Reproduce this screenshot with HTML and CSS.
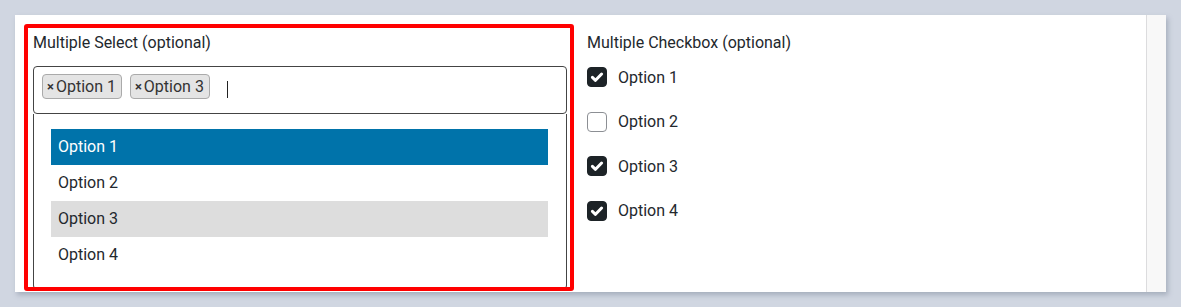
FILE: index.html
```html
<!DOCTYPE html>
<html lang="en">
<head>
<meta charset="utf-8">
<title>Fields</title>
<link rel="stylesheet" href="styles.css">
</head>
<body>
<div class="card">
  <div class="field field-select">
    <div class="label">Multiple Select (optional)</div>
    <div class="select">
      <span class="tag"><span class="tag-x">×</span>Option 1</span>
      <span class="tag"><span class="tag-x">×</span>Option 3</span>
      <span class="caret"></span>
    </div>
    <div class="dropdown">
      <ul class="options">
        <li class="opt opt-active">Option 1</li>
        <li class="opt">Option 2</li>
        <li class="opt opt-selected">Option 3</li>
        <li class="opt">Option 4</li>
      </ul>
    </div>
  </div>
  <div class="field field-check">
    <div class="label">Multiple Checkbox (optional)</div>
    <div class="checks">
      <label class="check"><span class="box box-on"><svg viewBox="0 0 20 20" width="20" height="20"><path d="M5.4 10.3 L8.5 13.3 L14.6 7" fill="none" stroke="#fff" stroke-width="3" stroke-linecap="round" stroke-linejoin="round"/></svg></span>Option 1</label>
      <label class="check"><span class="box"></span>Option 2</label>
      <label class="check"><span class="box box-on"><svg viewBox="0 0 20 20" width="20" height="20"><path d="M5.4 10.3 L8.5 13.3 L14.6 7" fill="none" stroke="#fff" stroke-width="3" stroke-linecap="round" stroke-linejoin="round"/></svg></span>Option 3</label>
      <label class="check"><span class="box box-on"><svg viewBox="0 0 20 20" width="20" height="20"><path d="M5.4 10.3 L8.5 13.3 L14.6 7" fill="none" stroke="#fff" stroke-width="3" stroke-linecap="round" stroke-linejoin="round"/></svg></span>Option 4</label>
    </div>
  </div>
  <div class="strip"></div>
</div>
</body>
</html>
```

FILE: styles.css
```css
* { box-sizing: border-box; }
html, body { margin: 0; padding: 0; }
body {
  background: #d0d6e1;
  font-family: Roboto, "Liberation Sans", sans-serif;
  color: #23282d;
  width: 1181px;
  height: 307px;
  padding: 15px 0 0 15px;
}
.card {
  width: 1151px;
  height: 277px;
  background: #fff;
  box-shadow: 2px 3px 5px rgba(90, 100, 120, 0.35);
  display: flex;
  padding: 9px 0 0 9px;
}
.field-select {
  width: 550px;
  height: 267px;
  border: 4px solid #ff0000;
  border-radius: 3px;
  overflow: hidden;
  padding: 4px 3px 0 5px;
}
.label {
  font-size: 16px;
  line-height: 22px;
  height: 22px;
  color: #23282d;
}
.select {
  margin-top: 12px;
  height: 48px;
  border: 1px solid #444;
  border-radius: 4px;
  padding: 7px 8px 0 8px;
  display: flex;
  align-items: flex-start;
  gap: 8px;
}
.tag {
  display: inline-flex;
  align-items: center;
  height: 25px;
  padding: 0 5px 0 4px;
  background: #e4e4e4;
  border: 1px solid #aaa;
  border-radius: 4px;
  font-size: 16px;
  color: #333;
}
.tag-x {
  font-weight: 700;
  font-size: 13px;
  margin-right: 2px;
  color: #333;
}
.caret {
  width: 1px;
  height: 17px;
  background: #222;
  margin: 7px 0 0 9px;
}
.dropdown {
  height: 175px;
  border: 1px solid #444;
  border-top: none;
  border-radius: 0 0 4px 4px;
  padding: 15px 18px 0 17px;
}
.options {
  list-style: none;
  margin: 0;
  padding: 0;
}
.opt {
  height: 36px;
  line-height: 36px;
  padding-left: 7px;
  font-size: 16px;
  color: #23282d;
}
.opt-active {
  background: #0073aa;
  color: #fff;
}
.opt-selected {
  background: #dddddd;
}
.field-check {
  flex: 1;
  padding: 8px 0 0 13px;
}
.checks {
  margin-top: 11px;
  display: flex;
  flex-direction: column;
  gap: 20.5px;
}
.check {
  display: flex;
  align-items: center;
  height: 24px;
  font-size: 16px;
  color: #23282d;
}
.box {
  width: 20px;
  height: 20px;
  border: 1px solid #8c8f94;
  border-radius: 4px;
  margin-right: 11px;
  background: #fff;
  display: inline-flex;
  align-items: center;
  justify-content: center;
  overflow: hidden;
}
.box-on {
  background: #1d2327;
  border-color: #1d2327;
}
.box svg { flex: none; }
.strip {
  width: 20px;
  margin-top: -9px;
  background: #f8f8f8;
  border-left: 1px solid #dcdcde;
}
```
